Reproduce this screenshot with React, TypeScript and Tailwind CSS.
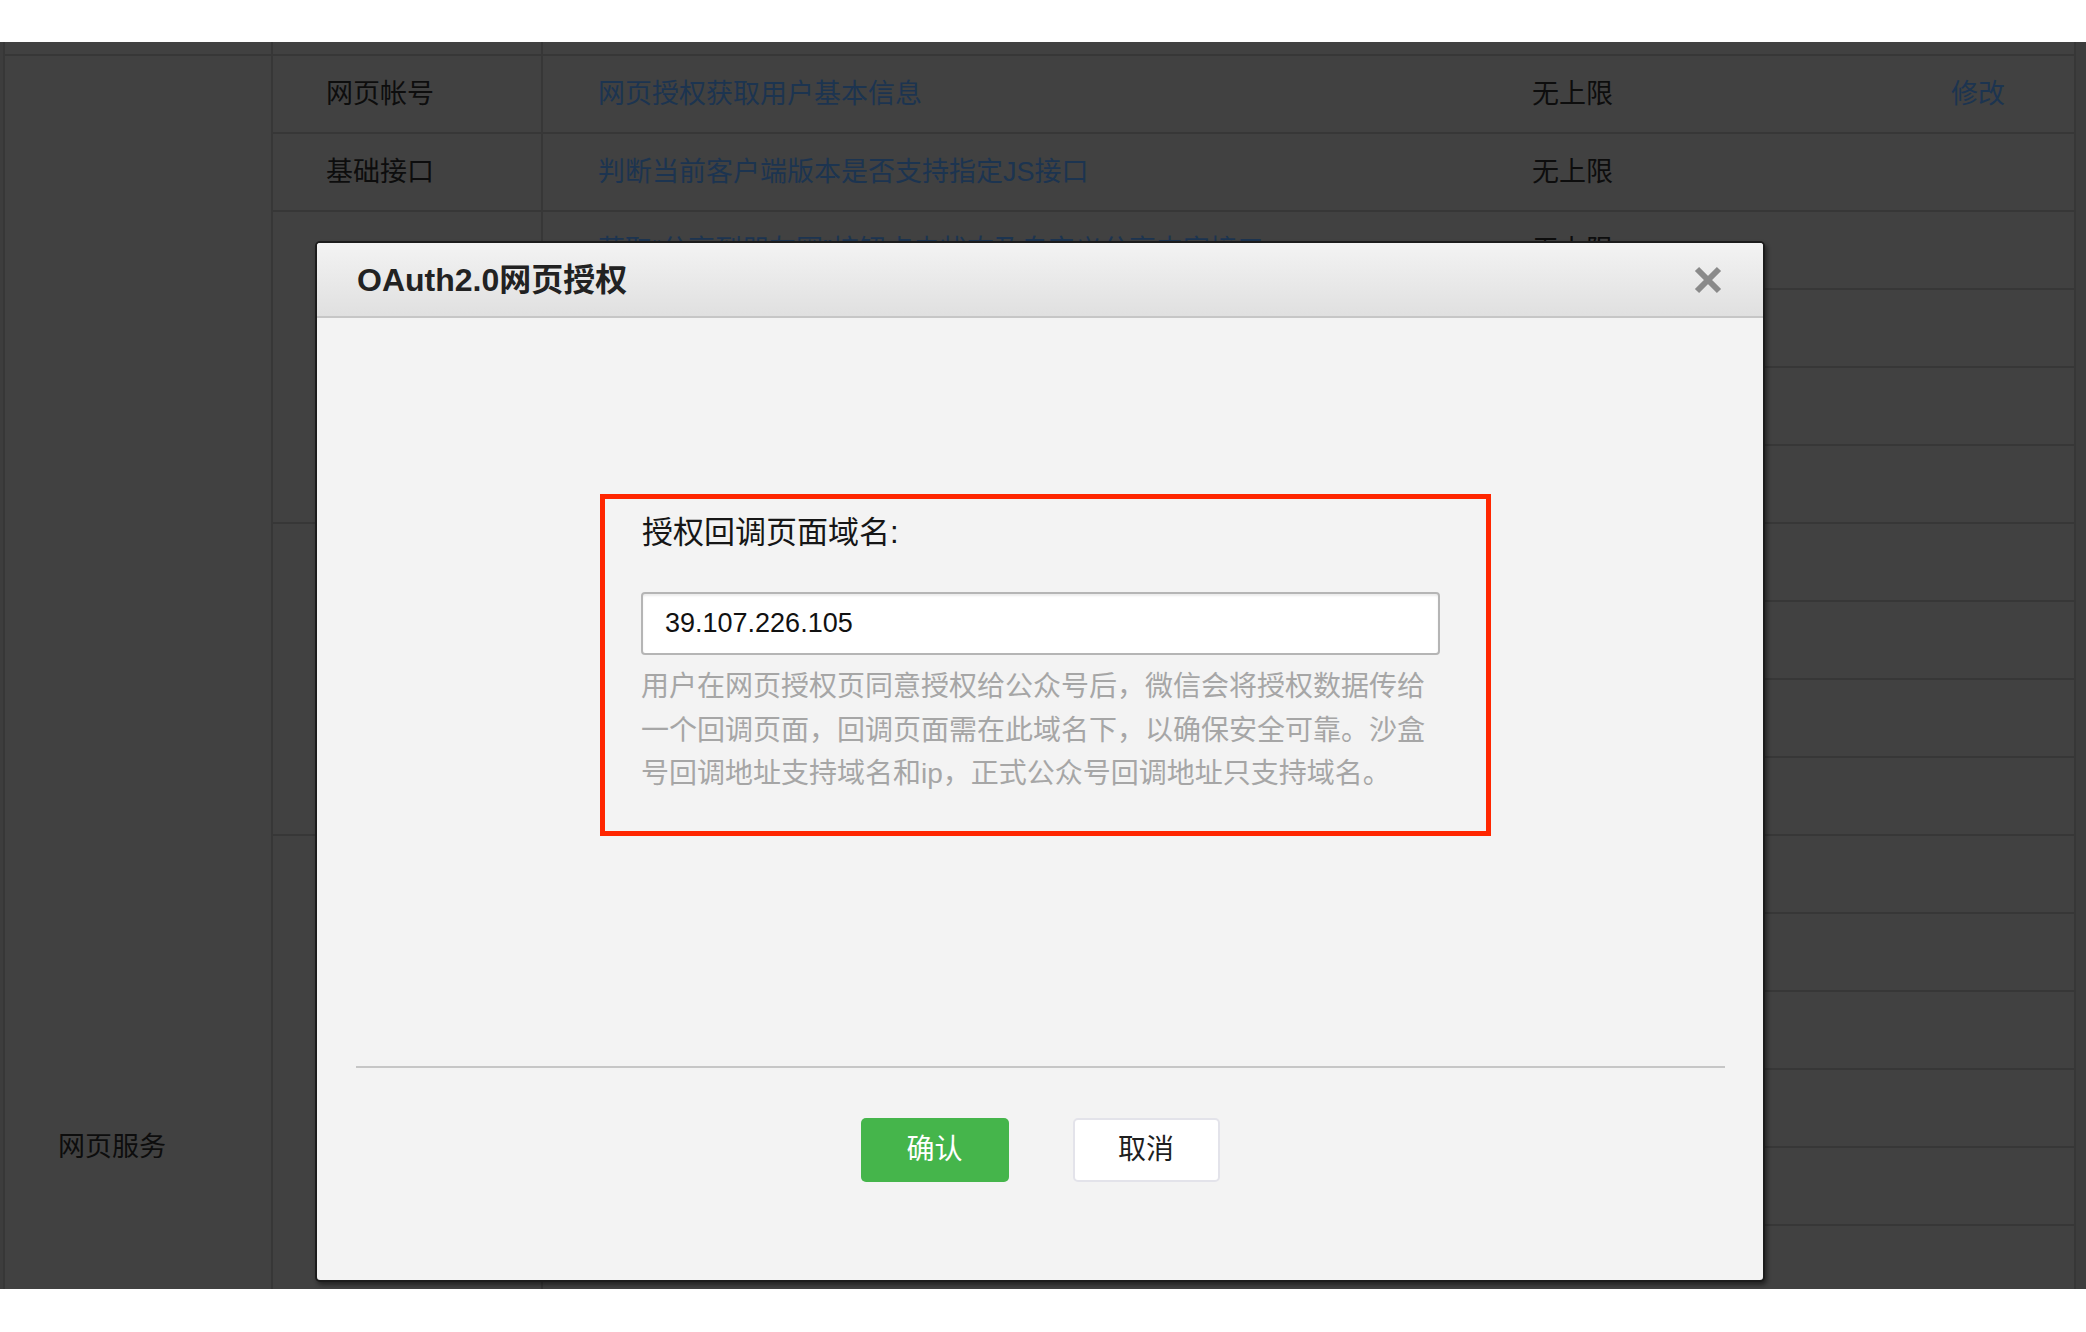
import { ReactNode } from "react"

const FONT = "font-['Liberation_Sans','Noto_Sans_CJK_SC',sans-serif]"

// 底层表格（被遮罩压暗后的样子）
const ROWS: { link?: string; limit?: string; action?: string }[] = [
  { link: "网页授权获取用户基本信息", limit: "无上限", action: "修改" },
  { link: "判断当前客户端版本是否支持指定JS接口", limit: "无上限" },
  { link: "获取“分享到朋友圈”按钮点击状态及自定义分享内容接口", limit: "无上限" },
  {}, {}, {}, {}, {}, {}, {}, {}, {}, {}, {}, {}, {},
]

const HELP_LINES = [
  "用户在网页授权页同意授权给公众号后，微信会将授权数据传给",
  "一个回调页面，回调页面需在此域名下，以确保安全可靠。沙盒",
  "号回调地址支持域名和ip，正式公众号回调地址只支持域名。",
]

function Cell({ children, className }: { children?: ReactNode; className?: string }) {
  return (
    <div className={`h-[78px] shrink-0 border-b-2 border-[#373737] flex items-center ${className ?? ""}`}>
      {children}
    </div>
  )
}

function CloseIcon() {
  return (
    <svg width="30" height="28" viewBox="0 0 30 28" className="blur-[0.4px]">
      <path d="M4 3 L26 25 M26 3 L4 25" stroke="#8a8a8a" strokeWidth="6" strokeLinecap="butt" />
    </svg>
  )
}

function OAuthDialog() {
  return (
    <div className="absolute left-[315px] top-[199px] w-[1450px] h-[1041px] bg-[#f3f3f3] border-2 border-[#1c1c1c] rounded-[5px] shadow-[2px_3px_4px_rgba(0,0,0,0.45)] flex flex-col overflow-hidden">
      {/* Header */}
      <div className="h-[75px] shrink-0 border-b-2 border-[#c6c6c6] bg-gradient-to-b from-[#f3f3f3] to-[#e0e0e0] flex items-center justify-between pl-[40px] pr-[40px]">
        <span className="text-[32px] leading-[40px] font-bold text-[#222]">OAuth2.0网页授权</span>
        <CloseIcon />
      </div>

      {/* Body */}
      <div className="ml-[283px] mt-[176px] w-[891px] h-[342px] border-[5px] border-[#ff2600] pl-[36px] pt-[14px]">
        <div className="text-[31px] leading-[40px] text-[#161616] pl-[1px]">授权回调页面域名:</div>
        <input
          readOnly
          value="39.107.226.105"
          className="mt-[39px] block w-[799px] h-[63px] bg-white border-2 border-[#b5b5b5] rounded-[4px] pl-[22px] text-[27px] text-[#111] outline-none shadow-[inset_0_2px_2px_rgba(0,0,0,0.08)]"
        />
        <div className="mt-[10px] text-[28px] leading-[43.5px] text-[#a6a6a6] whitespace-nowrap">
          {HELP_LINES.map((line) => (
            <div key={line}>{line}</div>
          ))}
        </div>
      </div>

      <div className="mt-[230px] ml-[39px] mr-[38px] h-[2px] bg-[#c6c6c6]" />

      {/* Footer buttons */}
      <div className="mt-[50px] flex justify-center gap-[64px]">
        <button className="w-[148px] h-[64px] rounded-[5px] bg-[#45b54b] text-white text-[28px]">确认</button>
        <button className="w-[147px] h-[64px] rounded-[5px] bg-white border-2 border-[#e3e3ea] text-[#1f1f1f] text-[28px]">取消</button>
      </div>
    </div>
  )
}

export default function App() {
  return (
    <div className={`w-[2086px] h-[1332px] bg-white flex flex-col overflow-hidden ${FONT}`}>
      <div className="h-[42px] shrink-0" />

      <div className="relative h-[1247px] shrink-0 bg-[#414141] flex overflow-hidden text-[27px] text-[#0d0d0d]">
        <div className="w-[3px] shrink-0 bg-[#3d3d3d]" />

        {/* 分类列 */}
        <div className="w-[270px] shrink-0 border-l-2 border-r-2 border-[#373737] flex flex-col">
          <div className="h-[14px] shrink-0 border-b-2 border-[#373737]" />
          <div className="pl-[53px] pt-[1071px] leading-[40px]">网页服务</div>
        </div>

        {/* 子类列 */}
        <div className="w-[270px] shrink-0 border-r-2 border-[#373737] flex flex-col">
          <div className="h-[14px] shrink-0 border-b-2 border-[#373737]" />
          <Cell className="pl-[53px]">网页帐号</Cell>
          <Cell className="pl-[53px]">基础接口</Cell>
          <div className="h-[312px] shrink-0 border-b-2 border-[#373737]" />
          <div className="h-[312px] shrink-0 border-b-2 border-[#373737]" />
          <div className="flex-1" />
        </div>

        {/* 接口列表 */}
        <div className="w-[1533px] shrink-0 border-r-2 border-[#373737] flex flex-col">
          <div className="h-[14px] shrink-0 border-b-2 border-[#373737]" />
          {ROWS.map((row, i) => (
            <Cell key={i}>
              <div className="w-[989px] shrink-0 pl-[55px] text-[#1c3450] whitespace-nowrap">{row.link}</div>
              <div className="w-[419px] shrink-0">{row.limit}</div>
              <div className="text-[#1c3450]">{row.action}</div>
            </Cell>
          ))}
        </div>

        <div className="flex-1 bg-[#3d3d3d]" />

        <OAuthDialog />
      </div>

      <div className="flex-1" />
    </div>
  )
}
